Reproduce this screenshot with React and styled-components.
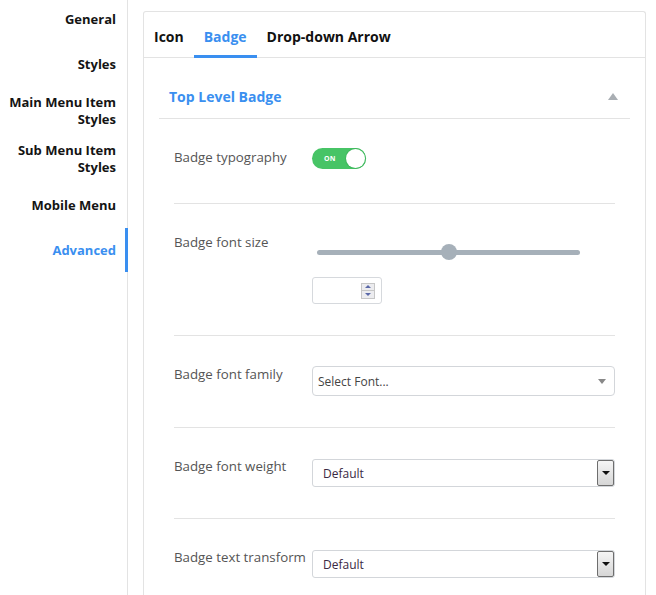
import React from "react";
import styled, { createGlobalStyle } from "styled-components";

const Global = createGlobalStyle`
  html, body { margin: 0; padding: 0; background: #fff; overflow: hidden; }
  body { font-family: "Open Sans", "Noto Sans", Arial, sans-serif; }
  * { box-sizing: border-box; }
`;

const Page = styled.div`
  display: flex;
  align-items: stretch;
  height: 595px;
`;

const Sidebar = styled.nav`
  width: 128px;
  flex: none;
  border-right: 1px solid #e3e3e3;
  margin-top: -3px;
`;

const NavItem = styled.div`
  position: relative;
  min-height: 45px;
  padding: 7px 11px 7px 4px;
  display: flex;
  align-items: center;
  justify-content: flex-end;
  text-align: right;
  font-size: 13px;
  line-height: 17px;
  font-weight: 700;
  color: ${(p) => (p.$active ? "#3a8ff0" : "#141414")};
  ${(p) =>
    p.$active &&
    `&::after{content:"";position:absolute;right:-1px;top:0;bottom:1px;width:3px;background:#3a8ff0;}`}
`;

const Panel = styled.section`
  margin-left: 15px;
  margin-top: 11px;
  width: 503px;
  flex: none;
  border: 1px solid #e3e3e3;
  border-bottom: none;
  border-radius: 3px 3px 0 0;
`;

const Tabs = styled.div`
  display: flex;
  height: 46px;
  border-bottom: 1px solid #e3e3e3;
`;

const Tab = styled.div`
  position: relative;
  padding: 0 10px;
  display: flex;
  align-items: center;
  padding-top: 3px;
  font-size: 14px;
  font-weight: 700;
  color: ${(p) => (p.$active ? "#3a8ff0" : "#111")};
  &::after {
    content: "";
    position: absolute;
    left: 0;
    right: 0;
    bottom: -1px;
    height: 3px;
    background: ${(p) => (p.$active ? "#3a8ff0" : "transparent")};
  }
`;

const Content = styled.div`
  padding: 0 15px;
`;

const SectionHead = styled.div`
  display: flex;
  align-items: center;
  justify-content: space-between;
  padding: 30px 12px 12px 10px;
  border-bottom: 1px solid #e3e3e3;
`;

const SectionTitle = styled.div`
  font-size: 14px;
  line-height: 18px;
  font-weight: 700;
  color: #3a8ff0;
`;

const Caret = styled.span`
  width: 0;
  height: 0;
  border-left: 5px solid transparent;
  border-right: 5px solid transparent;
  border-bottom: 7px solid #a9aeb3;
  margin-top: -2px;
`;

const Rows = styled.div`
  padding: 0 15px;
`;

const Row = styled.div`
  display: flex;
  align-items: flex-start;
  padding: 29px 0 31px;
  border-bottom: 1px solid #e3e3e3;
`;

const Label = styled.div`
  width: 138px;
  flex: none;
  font-size: 13.3px;
  line-height: 18px;
  color: #555;
`;

const Control = styled.div`
  flex: 1;
  display: flex;
  flex-direction: column;
  align-items: flex-start;
  min-height: ${(p) => p.$h || 0}px;
`;

const Toggle = styled.div`
  width: 54px;
  height: 21px;
  border-radius: 11px;
  background: #47c466;
  position: relative;
  display: flex;
  align-items: center;
  padding-left: 12px;
  font-size: 7px;
  font-weight: 700;
  color: #fff;
  letter-spacing: 0.2px;
`;

const Knob = styled.span`
  position: absolute;
  right: 1px;
  top: 1px;
  width: 19px;
  height: 19px;
  border-radius: 50%;
  background: #fff;
  box-shadow: 0 0 0 1px #3fb85d;
`;

const SliderWrap = styled.div`
  position: relative;
  width: 263px;
  height: 38px;
  margin-left: 5px;
  display: flex;
  align-items: center;
`;

const Track = styled.div`
  width: 100%;
  height: 5px;
  border-radius: 3px;
  background: #a6b0b9;
`;

const Thumb = styled.span`
  position: absolute;
  top: 50%;
  width: 16px;
  height: 16px;
  margin: -8px 0 0 -8px;
  border-radius: 50%;
  background: #a6b0b9;
`;

const NumberBox = styled.div`
  margin-top: 6px;
  width: 70px;
  height: 27px;
  border: 1px solid #d6d9dd;
  border-radius: 3px;
  display: flex;
  align-items: center;
  justify-content: flex-end;
  padding-right: 6px;
`;

const Spinner = styled.div`
  display: flex;
  flex-direction: column;
  width: 14px;
  height: 16px;
  border: 1px solid #c6c6c6;
  background: #ececef;
`;

const SpinBtn = styled.div`
  flex: 1;
  display: flex;
  align-items: center;
  justify-content: center;
  & + & { border-top: 1px solid #c6c6c6; }
  &::before {
    content: "";
    border-left: 3px solid transparent;
    border-right: 3px solid transparent;
    ${(p) => (p.$down ? "border-top: 3px solid #5a68a8;" : "border-bottom: 3px solid #5a68a8;")}
  }
`;

const FontSelect = styled.div`
  margin-top: 1px;
  width: 100%;
  height: 30px;
  border: 1px solid #d3d6da;
  border-radius: 4px;
  display: flex;
  align-items: center;
  justify-content: space-between;
  padding: 0 8px 0 5px;
  font-size: 12px;
  color: #444;
  &::after {
    content: "";
    border-left: 4px solid transparent;
    border-right: 4px solid transparent;
    border-top: 5px solid #888;
  }
`;

const NativeSelect = styled.div`
  margin-top: 2px;
  width: 100%;
  height: 28px;
  border: 1px solid #d3d6da;
  border-radius: 3px;
  display: flex;
  align-items: center;
  justify-content: space-between;
  padding: 0 0 0 10px;
  font-size: 12px;
  color: #3a2a44;
`;

const DropBtn = styled.div`
  width: 17px;
  height: 26px;
  border: 1px solid #6e6e6e;
  border-radius: 2px;
  background: linear-gradient(#f5f5f5, #d6d6d6);
  display: flex;
  align-items: center;
  justify-content: center;
  &::before {
    content: "";
    border-left: 4px solid transparent;
    border-right: 4px solid transparent;
    border-top: 4px solid #111;
  }
`;

const navItems = [
  "General",
  "Styles",
  ["Main Menu Item", "Styles"],
  ["Sub Menu Item", "Styles"],
  "Mobile Menu",
  "Advanced",
];

export default function App() {
  return (
    <>
      <Global />
      <Page>
        <Sidebar>
          {navItems.map((it, i) => (
            <NavItem key={i} $active={it === "Advanced"}>
              {Array.isArray(it) ? (
                <span>
                  {it[0]}
                  <br />
                  {it[1]}
                </span>
              ) : (
                it
              )}
            </NavItem>
          ))}
        </Sidebar>
        <Panel>
          <Tabs>
            <Tab>Icon</Tab>
            <Tab $active>Badge</Tab>
            <Tab>Drop-down Arrow</Tab>
          </Tabs>
          <Content>
            <SectionHead>
              <SectionTitle>Top Level Badge</SectionTitle>
              <Caret />
            </SectionHead>
            <Rows>
              <Row>
                <Label>Badge typography</Label>
                <Control $h={24}>
                  <Toggle>
                    ON
                    <Knob />
                  </Toggle>
                </Control>
              </Row>
              <Row>
                <Label>Badge font size</Label>
                <Control>
                  <SliderWrap>
                    <Track />
                    <Thumb style={{ left: "50%" }} />
                  </SliderWrap>
                  <NumberBox>
                    <Spinner>
                      <SpinBtn />
                      <SpinBtn $down />
                    </Spinner>
                  </NumberBox>
                </Control>
              </Row>
              <Row>
                <Label>Badge font family</Label>
                <Control>
                  <FontSelect>Select Font...</FontSelect>
                </Control>
              </Row>
              <Row>
                <Label>Badge font weight</Label>
                <Control>
                  <NativeSelect>
                    Default
                    <DropBtn />
                  </NativeSelect>
                </Control>
              </Row>
              <Row>
                <Label>Badge text transform</Label>
                <Control>
                  <NativeSelect>
                    Default
                    <DropBtn />
                  </NativeSelect>
                </Control>
              </Row>
            </Rows>
          </Content>
        </Panel>
      </Page>
    </>
  );
}
